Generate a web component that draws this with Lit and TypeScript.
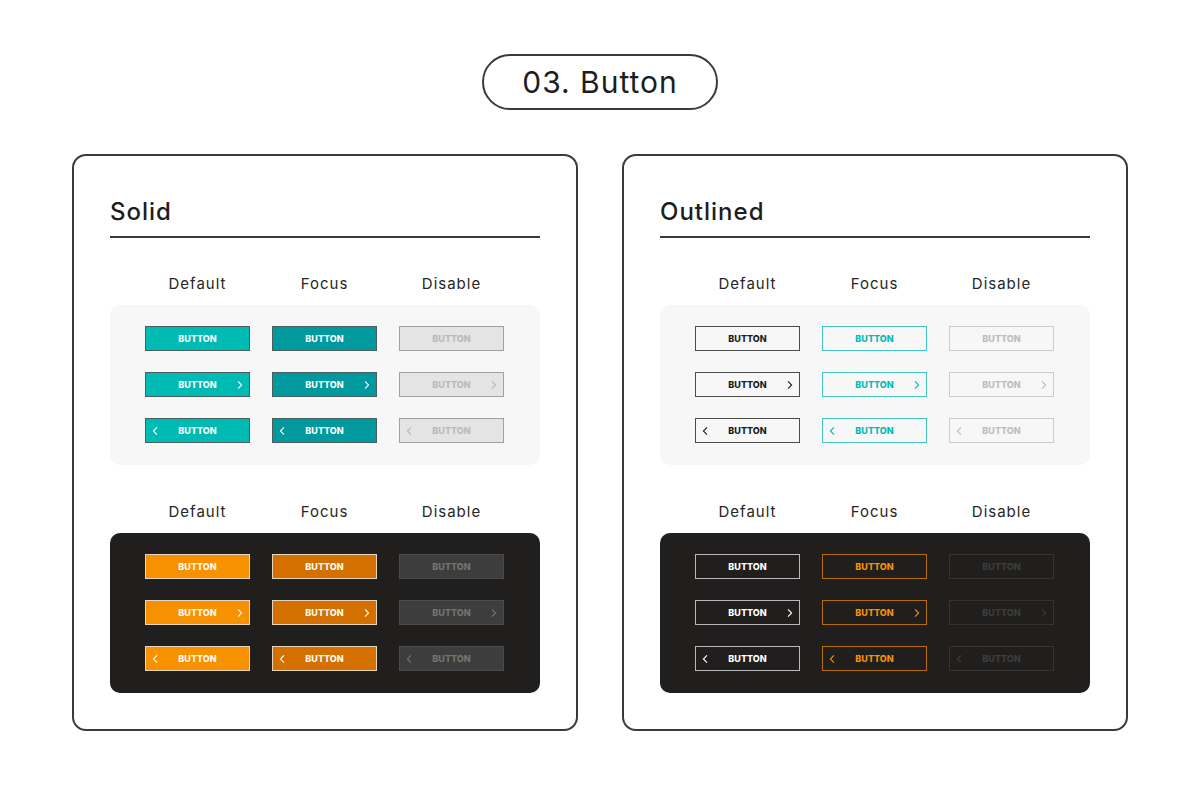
import { LitElement, html, css, svg } from "lit";
import { customElement, property } from "lit/decorators.js";

type Variant = "solid" | "outlined";
type Theme = "light" | "dark";
type Mode = "default" | "focus" | "disabled";
type Arrow = "none" | "right" | "left";

const MODES: { mode: Mode; label: string }[] = [
  { mode: "default", label: "Default" },
  { mode: "focus", label: "Focus" },
  { mode: "disabled", label: "Disable" },
];
const ARROWS: Arrow[] = ["none", "right", "left"];
const THEMES: Theme[] = ["light", "dark"];

const chevron = (d: string) => html`
  <svg class="chevron" viewBox="0 0 8 8" aria-hidden="true">${svg`<path d=${d} />`}</svg>
`;

@customElement("kit-button")
class KitButton extends LitElement {
  @property() variant: Variant = "solid";
  @property() theme: Theme = "light";
  @property() mode: Mode = "default";
  @property() arrow: Arrow = "none";

  static styles = css`
    :host {
      display: block;
      min-width: 0;
    }
    .button {
      display: grid;
      grid-template-columns: 8px 1fr 8px;
      align-items: center;
      box-sizing: border-box;
      width: 100%;
      height: 25px;
      margin: 0;
      padding: 0 5px;
      border: 1px solid var(--line);
      border-radius: 0;
      background: var(--fill);
      color: var(--ink);
      font: 800 9px/16px Inter, sans-serif;
      text-align: center;
      cursor: pointer;
    }
    .button:disabled {
      cursor: default;
    }
    .text {
      grid-column: 2;
      grid-row: 1;
    }
    .chevron {
      display: block;
      width: 8px;
      height: 8px;
      grid-row: 1;
      fill: none;
      stroke: currentColor;
      stroke-width: 1.1;
    }
    .left .chevron {
      grid-column: 1;
    }
    .right .chevron {
      grid-column: 3;
    }

    .solid.light { --line: #4b5d5d; --ink: #f7fbfb; }
    .solid.light.default { --fill: #00bbb4; }
    .solid.light.focus { --fill: #00999e; }
    .solid.light.disabled { --fill: #e4e4e4; --line: #a0a0a0; --ink: #bababa; }

    .solid.dark { --line: #e6d6c0; --ink: #fffaf2; }
    .solid.dark.default { --fill: #f79100; }
    .solid.dark.focus { --fill: #d37000; }
    .solid.dark.disabled { --fill: #3d3d3d; --line: #4b4c4b; --ink: #737473; }

    .outlined { --fill: transparent; }
    .outlined.light.default { --line: #4c4c4c; --ink: #1c1c1c; }
    .outlined.light.focus { --line: #45c5c0; --ink: #00bbb4; }
    .outlined.light.disabled { --line: #cbcbcb; --ink: #bdbdbd; }
    .outlined.dark.default { --line: #b9b9bb; --ink: #ffffff; }
    .outlined.dark.focus { --line: #b56c0c; --ink: #f79100; }
    .outlined.dark.disabled { --line: #333433; --ink: #3c3d3c; }
  `;

  render() {
    return html`
      <button
        type="button"
        class="button ${this.variant} ${this.theme} ${this.mode} ${this.arrow}"
        ?disabled=${this.mode === "disabled"}
      >
        ${this.arrow === "left" ? chevron("M6 0.4 L2.4 4 L6 7.6") : null}
        <span class="text">BUTTON</span>
        ${this.arrow === "right" ? chevron("M2 0.4 L5.6 4 L2 7.6") : null}
      </button>
    `;
  }
}

@customElement("kit-card")
class KitCard extends LitElement {
  @property() heading = "";
  @property() variant: Variant = "solid";

  static styles = css`
    :host {
      display: block;
      box-sizing: border-box;
      min-width: 0;
      padding: 38px 36px 36px;
      border: 2px solid #3a3a3a;
      border-radius: 14px;
    }
    .heading {
      margin: 0 0 34px;
      padding-bottom: 6px;
      border-bottom: 2px solid #3a3a3a;
      color: #1d1d1d;
      font-size: 24px;
      font-weight: 500;
      line-height: 36px;
      letter-spacing: 1px;
    }
    .groups {
      display: grid;
      gap: 35px;
    }
    .row {
      display: grid;
      grid-template-columns: repeat(3, minmax(0, 1fr));
      column-gap: 22px;
      row-gap: 21px;
      padding: 0 36px 0 35px;
    }
    .labels {
      margin-bottom: 9px;
    }
    .label {
      margin: 0;
      color: #262626;
      font-size: 15px;
      font-weight: 400;
      line-height: 24px;
      letter-spacing: 1px;
      text-align: center;
    }
    .panel {
      padding-top: 21px;
      padding-bottom: 22px;
      border-radius: 10px;
    }
    .panel.light {
      background: #f7f7f7;
    }
    .panel.dark {
      background: #201f1d;
    }
  `;

  render() {
    return html`
      <h2 class="heading">${this.heading}</h2>
      <div class="groups">
        ${THEMES.map(
          (theme) => html`
            <section>
              <div class="row labels">
                ${MODES.map(({ label }) => html`<h3 class="label">${label}</h3>`)}
              </div>
              <div class="row panel ${theme}">
                ${ARROWS.map((arrow) =>
                  MODES.map(
                    ({ mode }) => html`
                      <kit-button
                        .variant=${this.variant}
                        .theme=${theme}
                        .mode=${mode}
                        .arrow=${arrow}
                      ></kit-button>
                    `
                  )
                )}
              </div>
            </section>
          `
        )}
      </div>
    `;
  }
}

@customElement("app-root")
class AppRoot extends LitElement {
  static styles = css`
    :host {
      display: block;
      box-sizing: border-box;
      min-height: 100vh;
      padding: 54px 72px 72px;
      background: #ffffff;
      font-family: Inter, sans-serif;
    }
    .title {
      width: fit-content;
      margin: 0 auto 44px;
      padding: 0 38px;
      border: 2px solid #3a3a3a;
      border-radius: 28px;
      color: #1d1d1d;
      font-size: 30px;
      font-weight: 400;
      line-height: 52px;
      letter-spacing: 1px;
    }
    .cards {
      display: grid;
      grid-template-columns: repeat(auto-fit, minmax(min(100%, 440px), 1fr));
      gap: 44px;
    }
  `;

  render() {
    return html`
      <main>
        <h1 class="title">03. Button</h1>
        <div class="cards">
          <kit-card heading="Solid" variant="solid"></kit-card>
          <kit-card heading="Outlined" variant="outlined"></kit-card>
        </div>
      </main>
    `;
  }
}
